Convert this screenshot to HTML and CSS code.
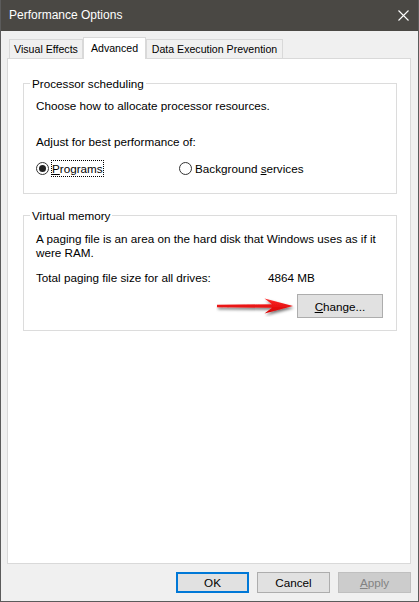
FILE: index.html
```html
<!DOCTYPE html>
<html lang="en">
<head>
  <meta charset="UTF-8" />
  <title>Performance Options</title>
  <link rel="stylesheet" href="styles.css">
</head>
<body>
  <div class="window">
    <div class="titlebar">
      <span class="title">Performance Options</span>
      <svg class="close" width="11" height="11" viewBox="0 0 11 11">
        <path d="M0.5 0.5 L10.5 10.5 M10.5 0.5 L0.5 10.5" stroke="#fff" stroke-width="1.1" fill="none" />
      </svg>
    </div>

    <div class="tabs">
      <div class="tab tab-visual">Visual Effects</div>
      <div class="tab tab-advanced active">Advanced</div>
      <div class="tab tab-dep">Data Execution Prevention</div>
    </div>

    <div class="panel">
      <fieldset class="group group-cpu">
        <legend>Processor scheduling</legend>
        <p class="line">Choose how to allocate processor resources.</p>
        <p class="line adjust">Adjust for best performance of:</p>
        <div class="radios">
          <label class="radio"><span class="dot checked"></span><span class="radio-text focus"><u>P</u>rograms</span></label>
          <label class="radio"><span class="dot"></span><span class="radio-text">Background <u>s</u>ervices</span></label>
        </div>
      </fieldset>

      <fieldset class="group group-vm">
        <legend>Virtual memory</legend>
        <p class="para">A paging file is an area on the hard disk that Windows uses as if it<br>were RAM.</p>
        <div class="total">
          <span>Total paging file size for all drives:</span>
          <span>4864 MB</span>
        </div>
        <div class="change-row">
          <!-- red annotation arrow -->
          <svg class="arrow" width="80" height="22" viewBox="0 0 80 22">
            <defs>
              <filter id="shadow" x="-10%" y="-40%" width="130%" height="200%">
                <feDropShadow dx="1" dy="2" stdDeviation="1.4" flood-color="#000" flood-opacity="0.55" />
              </filter>
              <linearGradient id="red" x1="0" y1="0" x2="0" y2="1">
                <stop offset="0" stop-color="#ff2a2a" />
                <stop offset="1" stop-color="#d30000" />
              </linearGradient>
            </defs>
            <path d="M1 9.8 L56 9.2 L48.5 3.5 L77 11 L48.5 18.5 L56 12.8 L1 12.2 Z" fill="url(#red)" filter="url(#shadow)" />
          </svg>
          <button class="btn btn-change"><u>C</u>hange...</button>
        </div>
      </fieldset>
    </div>

    <div class="footer">
      <button class="btn btn-default">OK</button>
      <button class="btn">Cancel</button>
      <button class="btn" disabled><u>A</u>pply</button>
    </div>
  </div>
</body>
</html>
```

FILE: styles.css
```css
body {
  margin: 0;
  font-family: "Liberation Sans", Arial, sans-serif;
  font-size: 11.7px;
  color: #000;
}
.window {
  width: 419px;
  height: 602px;
  box-sizing: border-box;
  border: 1px solid #5b5b5b;
  border-top: 0;
  background: #f0f0f0;
  display: flex;
  flex-direction: column;
}
.titlebar {
  height: 31px;
  flex: none;
  background: #4a4844;
  color: #fff;
  display: flex;
  align-items: center;
  justify-content: space-between;
  padding: 0 9px 0 8px;
}
.title {
  font-size: 12px;
  line-height: 15px;
}
.tabs {
  display: flex;
  align-items: flex-end;
  height: 21px;
  flex: none;
  margin: 6px 0 0 8px;
}
.tab {
  box-sizing: border-box;
  height: 19px;
  line-height: 19px;
  font-size: 10.6px;
  border: 1px solid #d9d9d9;
  border-bottom: 0;
  background: #f0f0f0;
  text-align: center;
  white-space: nowrap;
}
.tab-visual {
  width: 74px;
}
.tab-advanced {
  width: 63px;
}
.tab-dep {
  width: 137px;
}
.tab.active {
  height: 22px;
  line-height: 20px;
  margin-bottom: -1px;
  background: #fff;
  position: relative;
  z-index: 1;
}
.panel {
  height: 506px;
  flex: none;
  box-sizing: border-box;
  margin: 0 7px 0 6px;
  border: 1px solid #d9d9d9;
  background: #fff;
  padding: 17px 13px 0 15px;
}
.group {
  margin: 0;
  min-width: 0;
  border: 1px solid #dcdcdc;
  padding: 7px 13px 16px 12px;
}
.group legend {
  padding: 0 2px;
  margin-left: -6px;
  line-height: 15px;
}
.group p {
  margin: 0;
}
.line {
  line-height: 15px;
}
.line.adjust {
  margin-top: 21px;
}
.radios {
  display: grid;
  grid-template-columns: 143px auto;
  margin-top: 11px;
}
.radio {
  display: flex;
  align-items: center;
  gap: 2px;
}
.dot {
  width: 13px;
  height: 13px;
  box-sizing: border-box;
  border: 1px solid #333;
  border-radius: 50%;
  background: #fff;
  display: flex;
  align-items: center;
  justify-content: center;
}
.dot.checked::after {
  content: "";
  width: 7px;
  height: 7px;
  border-radius: 50%;
  background: #222;
}
.radio-text {
  border: 1px dotted transparent;
  line-height: 15px;
}
.radio-text.focus {
  border-color: #000;
}
.group-vm {
  margin-top: 14px;
  padding-top: 9px;
  padding-bottom: 12px;
}
.para {
  line-height: 14px;
  white-space: nowrap;
}
.total {
  display: grid;
  grid-template-columns: 232px auto;
  line-height: 15px;
  margin-top: 10px;
}
.change-row {
  display: flex;
  justify-content: flex-end;
  align-items: center;
  gap: 1px;
  margin-top: 9px;
}
.btn {
  box-sizing: border-box;
  font-family: inherit;
  font-size: 11.7px;
  color: #000;
  background: #e1e1e1;
  border: 1px solid #adadad;
  border-radius: 0;
  padding: 0;
  width: 73px;
  height: 21px;
}
.btn-change {
  width: 86px;
  height: 24px;
}
.btn-default {
  border: 2px solid #0078d7;
}
.btn:disabled {
  background: #cccccc;
  border-color: #bfbfbf;
  color: #838383;
}
.footer {
  display: flex;
  justify-content: flex-end;
  gap: 8px;
  padding: 8px 7px 0 0;
}
```
